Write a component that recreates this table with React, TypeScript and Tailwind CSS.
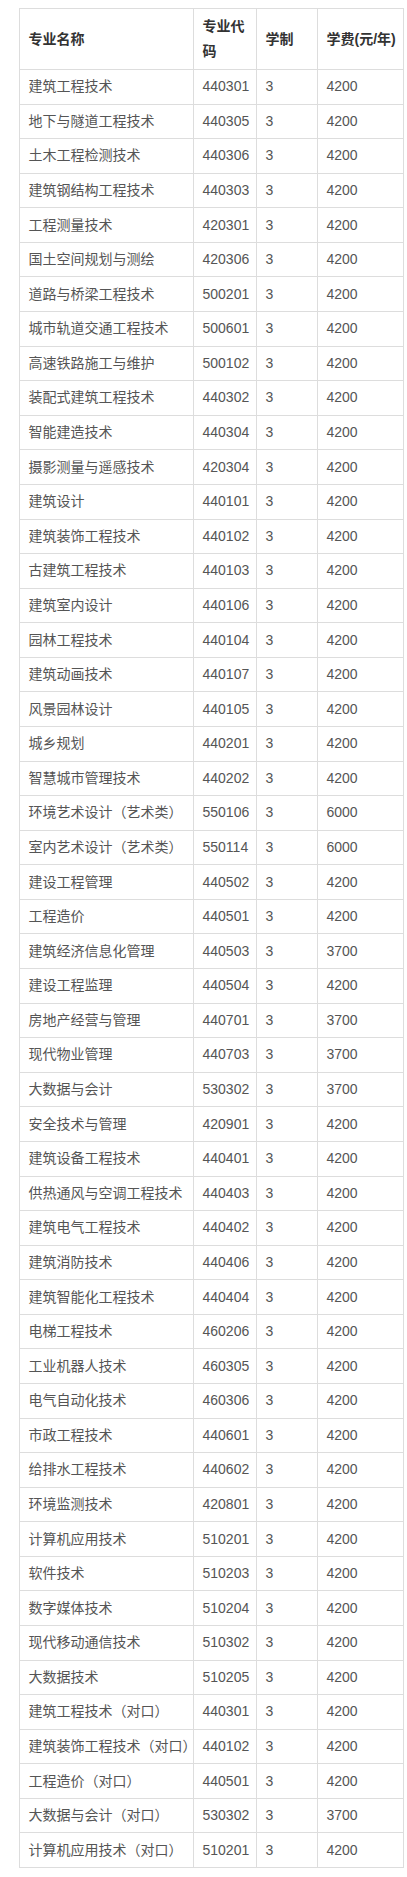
import React from 'react';

const rows: [string, string, string, string][] = [
  ['建筑工程技术', '440301', '3', '4200'],
  ['地下与隧道工程技术', '440305', '3', '4200'],
  ['土木工程检测技术', '440306', '3', '4200'],
  ['建筑钢结构工程技术', '440303', '3', '4200'],
  ['工程测量技术', '420301', '3', '4200'],
  ['国土空间规划与测绘', '420306', '3', '4200'],
  ['道路与桥梁工程技术', '500201', '3', '4200'],
  ['城市轨道交通工程技术', '500601', '3', '4200'],
  ['高速铁路施工与维护', '500102', '3', '4200'],
  ['装配式建筑工程技术', '440302', '3', '4200'],
  ['智能建造技术', '440304', '3', '4200'],
  ['摄影测量与遥感技术', '420304', '3', '4200'],
  ['建筑设计', '440101', '3', '4200'],
  ['建筑装饰工程技术', '440102', '3', '4200'],
  ['古建筑工程技术', '440103', '3', '4200'],
  ['建筑室内设计', '440106', '3', '4200'],
  ['园林工程技术', '440104', '3', '4200'],
  ['建筑动画技术', '440107', '3', '4200'],
  ['风景园林设计', '440105', '3', '4200'],
  ['城乡规划', '440201', '3', '4200'],
  ['智慧城市管理技术', '440202', '3', '4200'],
  ['环境艺术设计（艺术类）', '550106', '3', '6000'],
  ['室内艺术设计（艺术类）', '550114', '3', '6000'],
  ['建设工程管理', '440502', '3', '4200'],
  ['工程造价', '440501', '3', '4200'],
  ['建筑经济信息化管理', '440503', '3', '3700'],
  ['建设工程监理', '440504', '3', '4200'],
  ['房地产经营与管理', '440701', '3', '3700'],
  ['现代物业管理', '440703', '3', '3700'],
  ['大数据与会计', '530302', '3', '3700'],
  ['安全技术与管理', '420901', '3', '4200'],
  ['建筑设备工程技术', '440401', '3', '4200'],
  ['供热通风与空调工程技术', '440403', '3', '4200'],
  ['建筑电气工程技术', '440402', '3', '4200'],
  ['建筑消防技术', '440406', '3', '4200'],
  ['建筑智能化工程技术', '440404', '3', '4200'],
  ['电梯工程技术', '460206', '3', '4200'],
  ['工业机器人技术', '460305', '3', '4200'],
  ['电气自动化技术', '460306', '3', '4200'],
  ['市政工程技术', '440601', '3', '4200'],
  ['给排水工程技术', '440602', '3', '4200'],
  ['环境监测技术', '420801', '3', '4200'],
  ['计算机应用技术', '510201', '3', '4200'],
  ['软件技术', '510203', '3', '4200'],
  ['数字媒体技术', '510204', '3', '4200'],
  ['现代移动通信技术', '510302', '3', '4200'],
  ['大数据技术', '510205', '3', '4200'],
  ['建筑工程技术（对口）', '440301', '3', '4200'],
  ['建筑装饰工程技术（对口）', '440102', '3', '4200'],
  ['工程造价（对口）', '440501', '3', '4200'],
  ['大数据与会计（对口）', '530302', '3', '3700'],
  ['计算机应用技术（对口）', '510201', '3', '4200'],
];

const cell = 'border border-[#dddddd] px-[8.5px] text-left align-middle';

export default function App() {
  return (
    <div
      className="bg-white pt-2 pl-[19px] pb-[10px] text-[14px] leading-[25px]"
      style={{ fontFamily: '"Liberation Sans", Arial, "Noto Sans CJK SC", sans-serif' }}
    >
      <table className="w-[384px] table-fixed border-collapse">
        <colgroup>
          <col className="w-[174px]" />
          <col className="w-[63px]" />
          <col className="w-[61px]" />
          <col className="w-[86px]" />
        </colgroup>
        <thead>
          <tr className="h-[61px] font-bold text-[#333333]">
            <th className={cell}>专业名称</th>
            <th className={cell}>专业代码</th>
            <th className={cell}>学制</th>
            <th className={cell + ' whitespace-nowrap'}>学费(元/年)</th>
          </tr>
        </thead>
        <tbody className="text-[#555555]">
          {rows.map((r, i) => (
            <tr key={i} className="h-[34.58px]">
              <td className={cell + ' whitespace-nowrap'}>{r[0]}</td>
              <td className={cell}>{r[1]}</td>
              <td className={cell}>{r[2]}</td>
              <td className={cell}>{r[3]}</td>
            </tr>
          ))}
        </tbody>
      </table>
    </div>
  );
}
